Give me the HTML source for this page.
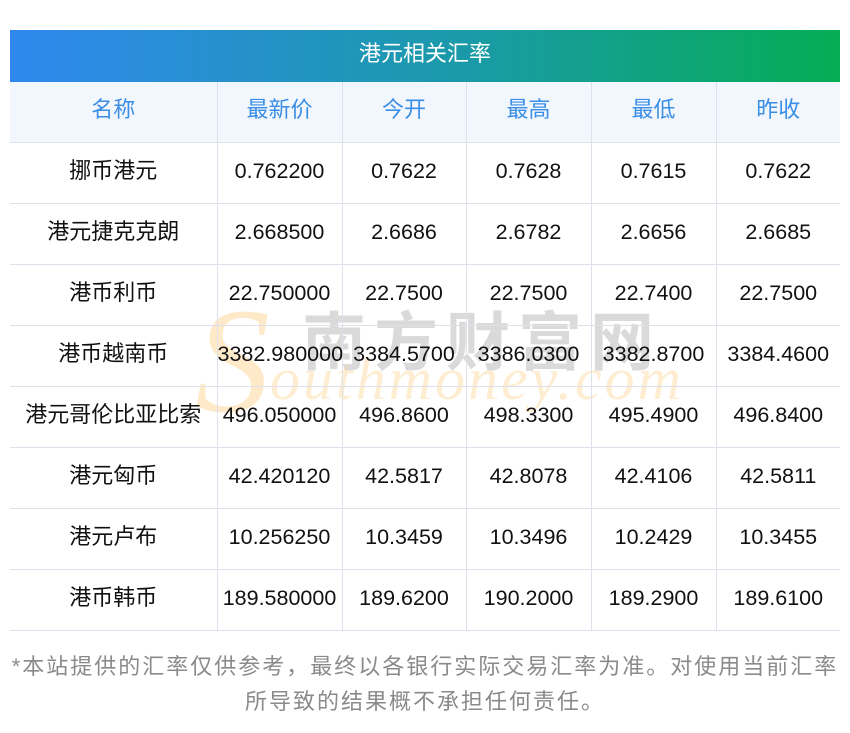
<!DOCTYPE html>
<html><head><meta charset="utf-8"><style>
body{margin:0;background:#fff;width:850px;height:733px;position:relative;overflow:hidden;font-family:"Liberation Sans","Noto Sans CJK SC",sans-serif}
.title{position:absolute;left:10px;top:30px;width:830px;height:52px;background:linear-gradient(90deg,#2f88ee,#1a9aa8 55%,#05ad54);color:#fff;font-size:22px;text-align:center;line-height:48px}
table{position:absolute;left:10px;top:82px;width:830px;border-collapse:collapse;table-layout:fixed}
td{border:1px solid #dde1ec;height:61px;padding:0 0 2px 0;box-sizing:border-box;text-align:center;font-size:21.5px;color:#111;white-space:nowrap;overflow:visible;line-height:1}
td.c{font-size:22px;padding-bottom:3px}
tr td:first-child{border-left:none}tr td:last-child{border-right:none}
tr:first-child td{border-top:none;background:#f2f6fd;color:#3a8ee6;font-size:22px;padding-bottom:3px;height:60px}
.wm{position:absolute;pointer-events:none}
.foot{position:absolute;left:0;top:649px;width:850px;text-align:center;color:#8a8a8a;font-size:22px;letter-spacing:2px;line-height:35px}
</style></head><body>
<div class="title">港元相关汇率</div>
<div class="wm" style="left:302px;top:292px;font-size:64px;color:rgba(150,150,150,.35);letter-spacing:8px;font-weight:bold">南方财富网</div>
<div class="wm" style="left:195px;top:275px;font-size:150px;color:rgba(253,200,120,.4);font-family:'Liberation Serif',serif;font-style:italic">S</div>
<div class="wm" style="left:270px;top:345px;font-size:60px;color:rgba(253,210,140,.4);font-family:'Liberation Serif',serif;font-style:italic;letter-spacing:3px">outhmoney.com</div>
<table>
<colgroup><col style="width:207px"><col style="width:125px"><col style="width:124px"><col style="width:125px"><col style="width:125px"><col style="width:124px"></colgroup>
<tr><td>名称</td><td>最新价</td><td>今开</td><td>最高</td><td>最低</td><td>昨收</td></tr>
<tr><td class="c">挪币港元</td><td>0.762200</td><td>0.7622</td><td>0.7628</td><td>0.7615</td><td>0.7622</td></tr>
<tr><td class="c">港元捷克克朗</td><td>2.668500</td><td>2.6686</td><td>2.6782</td><td>2.6656</td><td>2.6685</td></tr>
<tr><td class="c">港币利币</td><td>22.750000</td><td>22.7500</td><td>22.7500</td><td>22.7400</td><td>22.7500</td></tr>
<tr><td class="c">港币越南币</td><td>3382.980000</td><td>3384.5700</td><td>3386.0300</td><td>3382.8700</td><td>3384.4600</td></tr>
<tr><td class="c">港元哥伦比亚比索</td><td>496.050000</td><td>496.8600</td><td>498.3300</td><td>495.4900</td><td>496.8400</td></tr>
<tr><td class="c">港元匈币</td><td>42.420120</td><td>42.5817</td><td>42.8078</td><td>42.4106</td><td>42.5811</td></tr>
<tr><td class="c">港元卢布</td><td>10.256250</td><td>10.3459</td><td>10.3496</td><td>10.2429</td><td>10.3455</td></tr>
<tr><td class="c">港币韩币</td><td>189.580000</td><td>189.6200</td><td>190.2000</td><td>189.2900</td><td>189.6100</td></tr>
</table>
<div class="foot">*本站提供的汇率仅供参考，最终以各银行实际交易汇率为准。对使用当前汇率<br>所导致的结果概不承担任何责任。</div>
</body></html>
